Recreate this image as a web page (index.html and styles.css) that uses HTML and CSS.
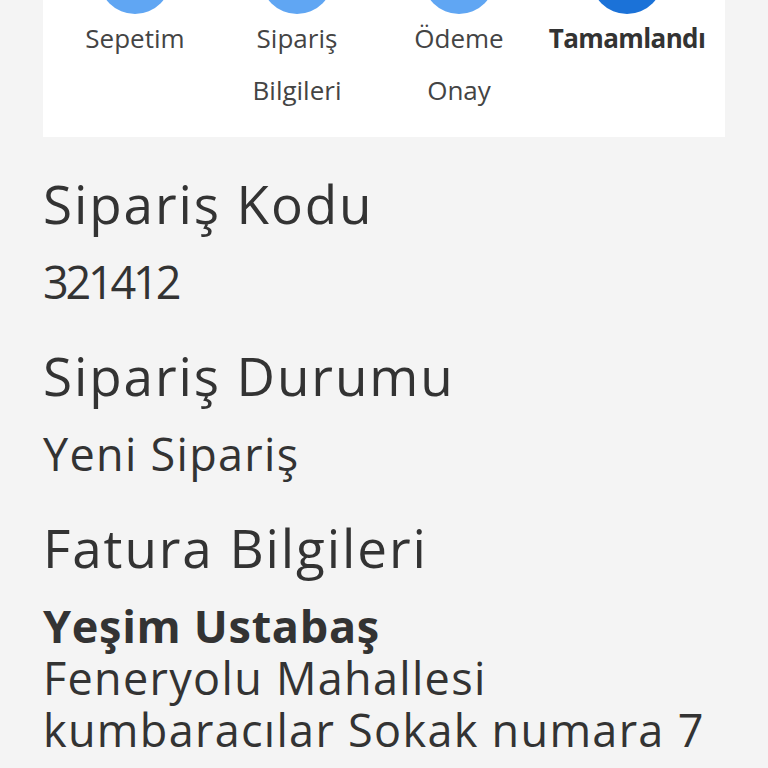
FILE: index.html
```html
<!DOCTYPE html>
<html lang="tr">
<head>
    <meta charset="UTF-8" />
    <meta name="viewport" content="width=device-width, initial-scale=1.0">
    <title>Sipariş Tamamlandı</title>
    <link rel="stylesheet" href="styles.css">
</head>
<body>
    <div class="page">
        <div class="steps">
            <div class="step">
                <span class="dot"></span>
                <p class="step-label">Sepetim</p>
            </div>
            <div class="step">
                <span class="dot"></span>
                <p class="step-label">Sipariş<br>Bilgileri</p>
            </div>
            <div class="step">
                <span class="dot"></span>
                <p class="step-label">Ödeme<br>Onay</p>
            </div>
            <div class="step active">
                <span class="dot"></span>
                <p class="step-label">Tamamlandı</p>
            </div>
        </div>

        <div class="info">
            <h2 class="info-title">Sipariş Kodu</h2>
            <p class="info-text code">321412</p>
        </div>

        <div class="info">
            <h2 class="info-title">Sipariş Durumu</h2>
            <p class="info-text">Yeni Sipariş</p>
        </div>

        <div class="info">
            <h2 class="info-title">Fatura Bilgileri</h2>
            <p class="info-text name">Yeşim Ustabaş</p>
            <p class="info-text">Feneryolu Mahallesi<br>kumbaracılar Sokak numara 7</p>
        </div>
    </div>
</body>
</html>
```

FILE: styles.css
```css
body {
    margin: 0;
    background-color: #f4f4f4;
    font-family: "Open Sans", Arial, sans-serif;
    color: #333;
    overflow: hidden;
}

.page {
    padding: 0 43px;
}

/* adim cubugu */
.steps {
    display: grid;
    grid-template-columns: 162px 162px 162px 1fr;
    margin-top: -78px;
    padding: 20px 11px 21px;
    background-color: #fff;
}

.step {
    display: flex;
    flex-direction: column;
    align-items: center;
}

.dot {
    width: 72px;
    height: 72px;
    border-radius: 50%;
    background-color: #60a6f3;
}

.step.active .dot {
    background-color: #1b72d8;
}

.step-label {
    margin: -2px 0 0;
    font-size: 26px;
    line-height: 52px;
    text-align: center;
    color: #444;
}

.step.active .step-label {
    font-weight: 700;
    letter-spacing: -0.6px;
    color: #333;
}

/* siparis bilgileri */
.info {
    margin-top: 34px;
}

.steps + .info {
    margin-top: 33px;
}

.info-title {
    margin: 0 0 18px;
    font-size: 53px;
    font-weight: 400;
    line-height: 68px;
    letter-spacing: 1.9px;
}

.info-text {
    margin: 0;
    font-size: 45px;
    line-height: 52px;
    letter-spacing: 1.3px;
}

.code {
    letter-spacing: -3.2px;
}

.name {
    font-weight: 700;
    letter-spacing: 0.7px;
}
```
